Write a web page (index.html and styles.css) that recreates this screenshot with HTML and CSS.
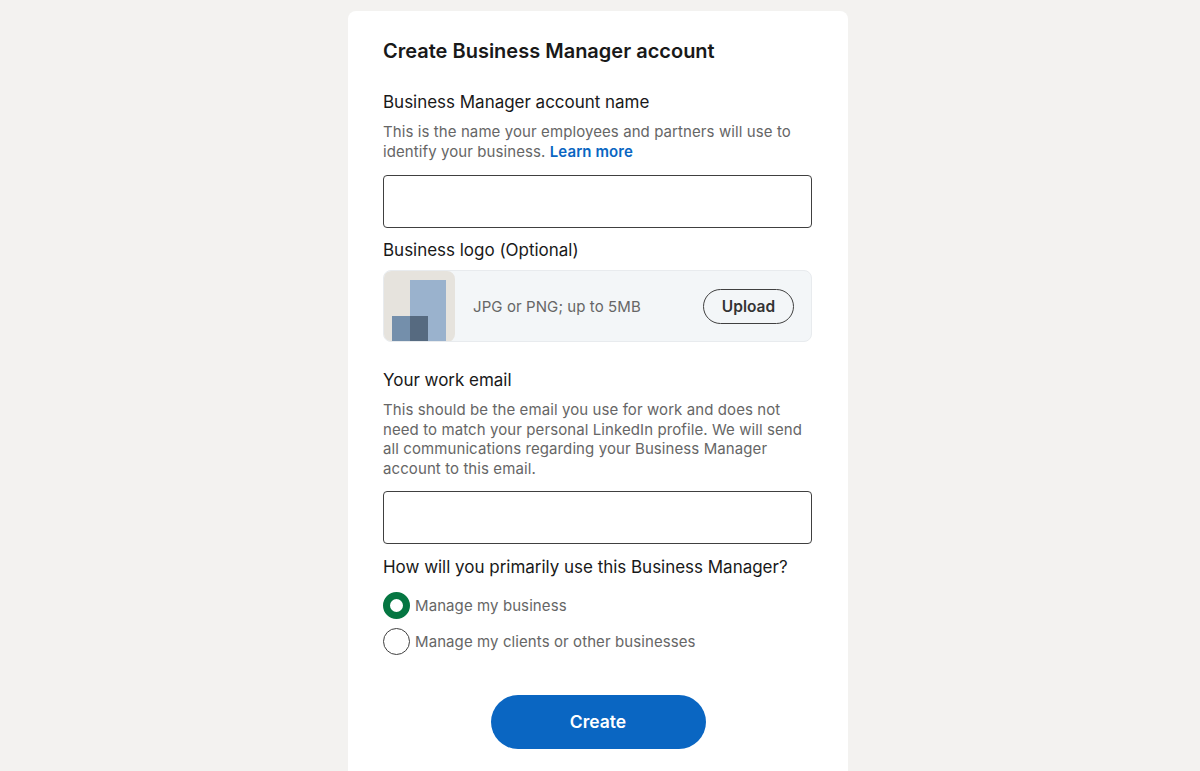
FILE: index.html
```html
<!DOCTYPE html>
<html lang="en">
<head>
<meta charset="utf-8">
<title>Create Business Manager account</title>
<link rel="stylesheet" href="styles.css">
</head>
<body>
<main class="card">
  <h1 class="title">Create Business Manager account</h1>
  <h2 class="label label-first">Business Manager account name</h2>
  <p class="help help-name">This is the name your employees and partners will use to identify your business. <a class="link" href="#">Learn more</a></p>
  <input class="field" type="text" aria-label="Business Manager account name">
  <h2 class="label label-logo">Business logo (Optional)</h2>
  <div class="logo-row">
    <svg class="logo-art" width="72" height="71" viewBox="0 0 72 71" aria-hidden="true">
      <rect width="72" height="71" rx="8" fill="#e6e3dd"/>
      <rect x="27" y="9" width="36" height="62" fill="#9ab2cd"/>
      <rect x="9" y="45" width="36" height="26" fill="#748fab"/>
      <rect x="27" y="45" width="18" height="26" fill="#566a80"/>
    </svg>
    <span class="logo-hint">JPG or PNG; up to 5MB</span>
    <button class="upload" type="button">Upload</button>
  </div>
  <h2 class="label label-email">Your work email</h2>
  <p class="help help-email">This should be the email you use for work and does not need to match your personal LinkedIn profile. We will send all communications regarding your Business Manager account to this email.</p>
  <input class="field" type="text" aria-label="Your work email">
  <h2 class="label label-use">How will you primarily use this Business Manager?</h2>
  <div class="radio-row radio-row-first"><span class="radio radio-on"></span><span class="radio-text">Manage my business</span></div>
  <div class="radio-row"><span class="radio"></span><span class="radio-text">Manage my clients or other businesses</span></div>
  <div class="actions"><button class="create" type="button">Create</button></div>
</main>
</body>
</html>
```
FILE: styles.css
```css
* { box-sizing: border-box; }
html, body { height: 100%; }
body {
  margin: 0;
  background: #f3f2f0;
  font-family: Inter, "Liberation Sans", sans-serif;
  overflow: hidden;
}
.card {
  width: 500px;
  height: 790px;
  margin: 11px 0 0 348px;
  padding: 26px 36px 0 35px;
  background: #fff;
  border-radius: 8px;
}
.title {
  margin: 0;
  font-size: 20px;
  line-height: 28px;
  font-weight: 600;
  color: #191919;
}
.label {
  margin: 0;
  font-size: 17px;
  line-height: 24px;
  font-weight: 400;
  color: #191919;
  letter-spacing: -0.02px;
}
.label-first { margin-top: 25px; }
.label-logo { margin-top: 10px; }
.label-email { margin-top: 26px; }
.label-use { margin-top: 11px; }
.help {
  margin: 8px 0 0;
  font-size: 15px;
  line-height: 19.6px;
  letter-spacing: 0.09px;
  color: #666;
}
.help-name { margin-bottom: 14px; }
.help-email { margin-bottom: 12px; }
.link { color: #0a66c2; font-weight: 600; text-decoration: none; }
.field {
  display: block;
  width: 100%;
  height: 53px;
  border: 1px solid #404040;
  border-radius: 4px;
  background: #fff;
}
.logo-row {
  display: flex;
  align-items: center;
  height: 72px;
  margin-top: 8px;
  background: #f3f6f8;
  border: 1px solid #e8ebee;
  border-radius: 8px;
  overflow: hidden;
}
.logo-art { flex: none; margin-left: -1px; }
.logo-hint { margin-left: 18px; font-size: 15px; letter-spacing: 0.09px; color: #666; }
.upload {
  margin-left: auto;
  margin-right: 17px;
  width: 91px;
  height: 35px;
  border: 1px solid #404040;
  border-radius: 18px;
  background: transparent;
  font: 600 15.5px Inter, "Liberation Sans", sans-serif;
  color: #333;
}
.radio-row { display: flex; align-items: center; gap: 5px; margin-top: 9px; }
.radio-row-first { margin-top: 13px; }
.radio {
  flex: none;
  width: 27px;
  height: 27px;
  border: 1px solid #404040;
  border-radius: 50%;
  background: #fff;
}
.radio-on { border: 7px solid #057642; }
.radio-text { font-size: 15px; letter-spacing: 0.09px; color: #666; }
.actions { display: flex; justify-content: center; margin-top: 40px; padding-left: 1px; }
.create {
  width: 215px;
  height: 54px;
  border: 0;
  border-radius: 27px;
  background: #0a66c2;
  color: #fff;
  font: 600 17.5px Inter, "Liberation Sans", sans-serif;
}
```
